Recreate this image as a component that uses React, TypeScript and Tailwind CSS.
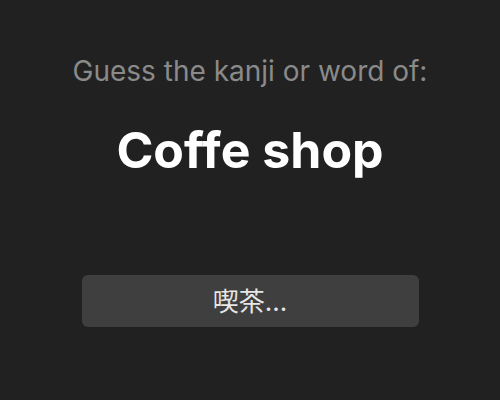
import React from 'react';

const App: React.FC = () => {
  return (
    <div
      className="w-[500px] h-[400px] bg-[#212121] flex flex-col items-center"
      style={{ fontFamily: 'Inter, "Noto Sans CJK JP", sans-serif', fontVariantLigatures: 'none' }}
    >
      <p className="mt-[54px] text-[28px] leading-[34px] text-[#8a8a8a]">Guess the kanji or word of:</p>
      <h1 className="mt-[32px] text-[50px] leading-[60px] font-bold text-white">Coffe shop</h1>
      <input
        type="text"
        placeholder="喫茶..."
        className="mt-[95px] w-[337px] h-[52px] rounded-md bg-[#3f3f3f] text-center text-[26px] text-white placeholder:text-[#e6e6e6] outline-none"
      />
    </div>
  );
};

export default App;
